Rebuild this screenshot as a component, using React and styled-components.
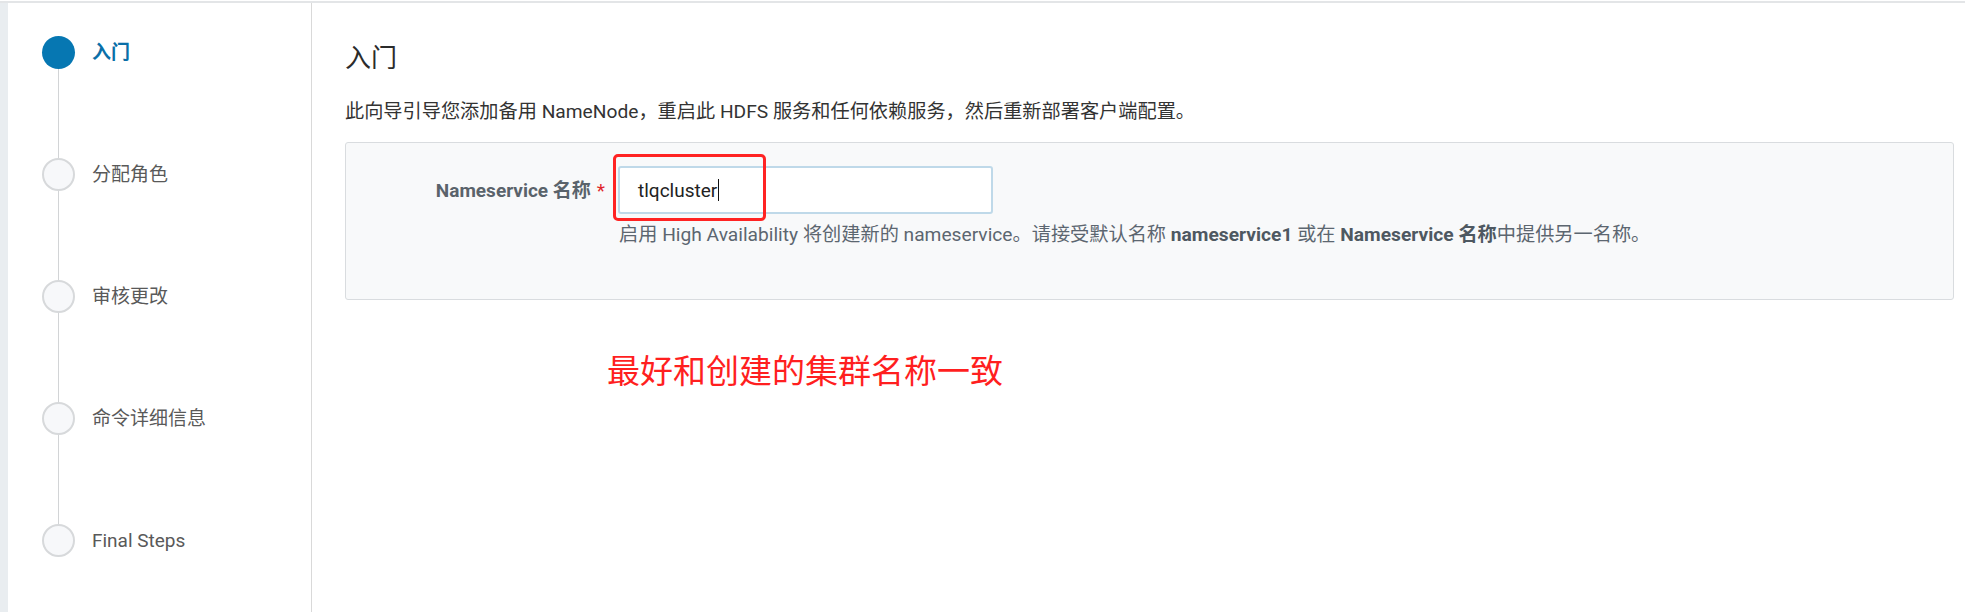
import React from "react";
import styled, { createGlobalStyle } from "styled-components";

const GlobalStyle = createGlobalStyle`
  html, body { margin: 0; padding: 0; background: #ffffff; }
  body {
    font-family: Roboto, "Noto Sans CJK SC", "Noto Sans", sans-serif;
    font-size: 19px;
    color: #333333;
  }
  * { box-sizing: border-box; }
`;

const Page = styled.div`
  margin-top: 1px;
  border-top: 2px solid #e3e5e7;
  display: flex;
  min-height: 611px;
`;

const Strip = styled.div`
  width: 8px;
  flex: none;
  background: #e9edf0;
`;

const Sidebar = styled.nav`
  width: 304px;
  flex: none;
  border-right: 1px solid #d9d9d9;
  padding: 33px 0 0 34px;
  display: flex;
  flex-direction: column;
`;

const Step = styled.div`
  display: flex;
  align-items: center;
  gap: 17px;
  height: 33px;
`;

const Dot = styled.span`
  width: 33px;
  height: 33px;
  flex: none;
  border-radius: 50%;
  background: ${(p) => (p.$active ? "#0677b2" : "#f7f8fa")};
  border: ${(p) => (p.$active ? "none" : "2px solid #d7d9db")};
`;

const StepLabel = styled.span`
  font-size: 19px;
  line-height: 1;
  white-space: nowrap;
  color: ${(p) => (p.$active ? "#0a6fa8" : "#595959")};
  font-weight: ${(p) => (p.$active ? 700 : 400)};
`;

const Connector = styled.div`
  width: 1px;
  height: 89px;
  margin-left: 16px;
  background: #d2d4d6;
`;

const Main = styled.main`
  flex: 1;
  padding: 40px 11px 0 33px;
  display: flex;
  flex-direction: column;
`;

const Heading = styled.h2`
  margin: 0;
  font-size: 26px;
  font-weight: 400;
  line-height: 31px;
  color: #2b2b2b;
`;

const Intro = styled.p`
  margin: 24px 0 0;
  font-size: 19.2px;
  line-height: 27px;
  color: #333333;
`;

const Panel = styled.section`
  margin-top: 17px;
  height: 158px;
  border: 1px solid #d9dcdf;
  border-radius: 3px;
  background: #f8f9fa;
  padding-top: 23px;
`;

const FormRow = styled.div`
  display: grid;
  grid-template-columns: 259px 1fr;
  column-gap: 13px;
  align-items: start;
`;

const Label = styled.label`
  grid-row: 1;
  grid-column: 1;
  align-self: center;
  text-align: right;
  font-weight: 700;
  font-size: 19px;
  line-height: 27px;
  color: #5a636b;
`;

const Required = styled.span`
  color: #e0262b;
  margin-left: 6px;
  font-weight: 400;
`;

const Field = styled.div`
  grid-row: 1;
  grid-column: 2;
  position: relative;
  width: 375px;
  height: 48px;
  border: 2px solid #bfd9e9;
  border-radius: 3px;
  background: #ffffff;
  display: flex;
  align-items: center;
  padding-left: 18px;
  font-size: 19px;
  color: #222222;
`;

const Caret = styled.span`
  display: inline-block;
  width: 1px;
  height: 22px;
  margin-left: 1px;
  background: #111111;
`;

const Highlight = styled.span`
  position: absolute;
  left: -7px;
  top: -14px;
  width: 153px;
  height: 67px;
  border: 3px solid #ff2323;
  border-radius: 5px;
  pointer-events: none;
`;

const Help = styled.div`
  grid-row: 2;
  grid-column: 2;
  margin-top: 7px;
  padding-left: 1px;
  font-size: 19.2px;
  line-height: 27px;
  color: #5c6670;

  b { font-weight: 700; color: #4e5861; }
`;

const Note = styled.div`
  margin: 49px 0 0 262px;
  font-family: "Noto Sans CJK SC", sans-serif;
  font-size: 33px;
  line-height: 40px;
  color: #ff1f1f;
`;

const steps = ["入门", "分配角色", "审核更改", "命令详细信息", "Final Steps"];

export default function App() {
  return (
    <>
      <GlobalStyle />
      <Page>
        <Strip />
        <Sidebar>
          {steps.map((s, i) => (
            <React.Fragment key={s}>
              <Step>
                <Dot $active={i === 0} />
                <StepLabel $active={i === 0}>{s}</StepLabel>
              </Step>
              {i < steps.length - 1 && <Connector />}
            </React.Fragment>
          ))}
        </Sidebar>
        <Main>
          <Heading>入门</Heading>
          <Intro>
            此向导引导您添加备用 NameNode，重启此 HDFS 服务和任何依赖服务，然后重新部署客户端配置。
          </Intro>
          <Panel>
            <FormRow>
              <Label>
                Nameservice 名称<Required>*</Required>
              </Label>
              <Field>
                tlqcluster
                <Caret />
                <Highlight />
              </Field>
              <Help>
                启用 High Availability 将创建新的 nameservice。请接受默认名称 <b>nameservice1</b> 或在 <b>Nameservice 名称</b>中提供另一名称。
              </Help>
            </FormRow>
          </Panel>
          <Note>最好和创建的集群名称一致</Note>
        </Main>
      </Page>
    </>
  );
}
